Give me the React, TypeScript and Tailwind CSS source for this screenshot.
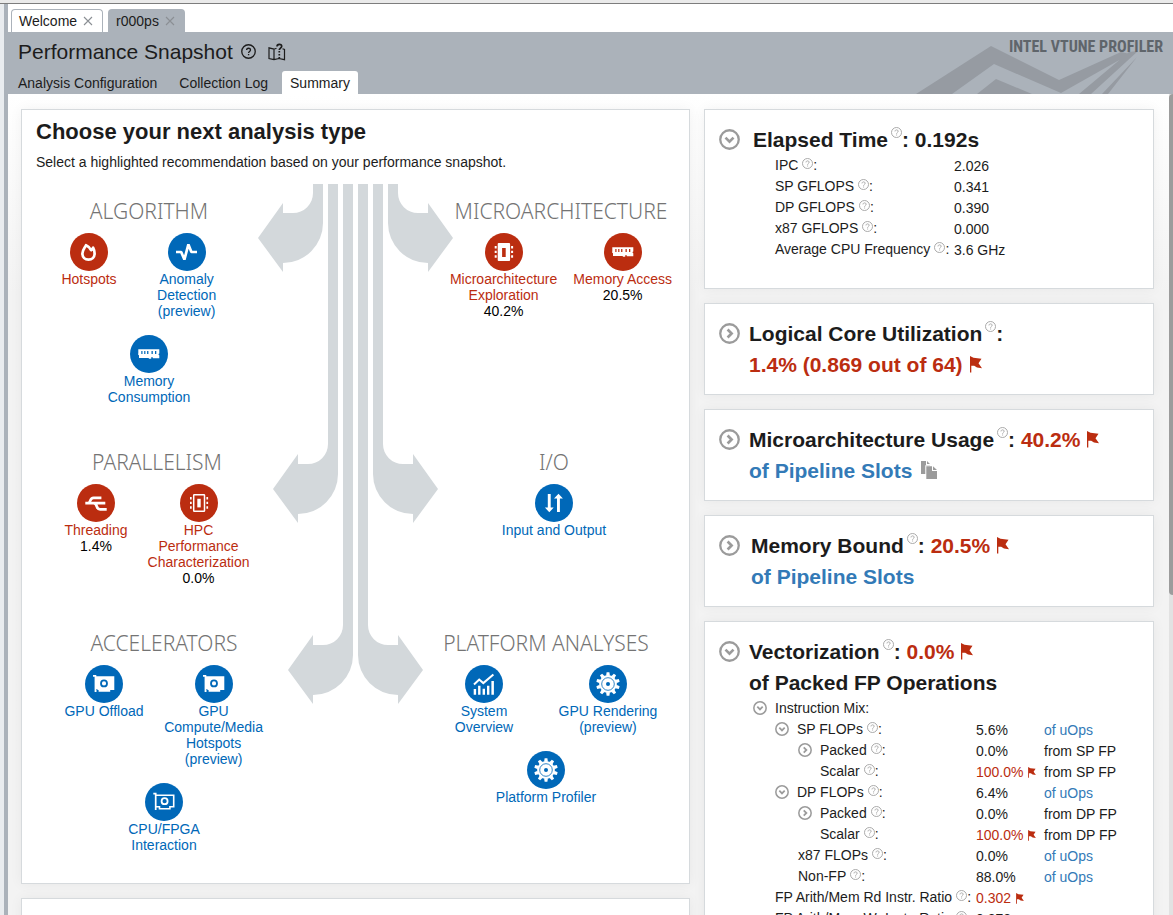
import React, { useState } from "react";

type IconName =
  | "flame" | "pulse" | "memory" | "chip" | "chipOutline" | "threads"
  | "io" | "gpu" | "gpuOutline" | "chart" | "gear";

const glyphs: Record<IconName, React.ReactNode> = {
  flame: (
    <path
      d="M16 12.200C14.800 15 12.400 17 12.400 20.600c0 3.700 2.600 6 6.100 6s6.100-2.400 6.100-6c0-2.100-.6-4.200-1.500-5.900-.4 1.200-1.100 2-2 2.500-.9-2.200-2.600-4-5.100-5z"
      fill="none" stroke="white" strokeWidth="2.700" strokeLinejoin="round"
    />
  ),
  pulse: <path d="M8 19h5.200l3.200 7.600L20.400 11.400 23.400 19H29" fill="none" stroke="white" strokeWidth="2.700" strokeLinejoin="bevel" />,
  memory: (
    <path
      fill="white" fillRule="evenodd"
      d="M8.300 14.300h21v4.200c-1 .2-1 1.600 0 1.800v3H22.800v-1.100h-1.600v1.500H18.800v-.7H9v-2.800c-1 0-1-1.600-.7-1.700zM11.300 16v3h1.200v-3zM14.200 16v3h1.200v-3zM17.100 16v3h1.300v-3zM21.500 16v3h1.300v-3zM25 16v3h1.300v-3z"
    />
  ),
  chip: (
    <g fill="white">
      <path fillRule="evenodd" d="M13.700 10h10.400q1 0 1 1v16q0 1-1 1H13.700q-1 0-1-1V11q0-1 1-1zM17.100 15v9h3.600v-9z" />
      <path d="M9.700 13h2v2.400h-2zM9.700 17.700h2v2.400h-2zM9.700 22.300h2v2.400h-2zM26.100 13h2v2.400h-2zM26.100 17.700h2v2.400h-2zM26.100 22.300h2v2.400h-2z" />
    </g>
  ),
  chipOutline: (
    <g fill="white">
      <rect x="13.700" y="10.700" width="10.800" height="16.600" rx=".6" fill="none" stroke="white" strokeWidth="1.500" />
      <rect x="17.300" y="14.800" width="3.400" height="8.600" />
      <path d="M10 13h1.700v2.400H10zM10 17.700h1.700v2.400H10zM10 22.300h1.700v2.400H10zM26.400 13h1.700v2.400h-1.700zM26.400 17.700h1.700v2.400h-1.700zM26.400 22.300h1.700v2.400h-1.700z" />
    </g>
  ),
  threads: (
    <path
      d="M8.300 19.200H28.300M11 19.200c3 0 1.200-5.400 5.600-5.400H24.400M16.500 19.200c4.600 0 1.800 6.200 6.600 6.200h6.600"
      fill="none" stroke="white" strokeWidth="2.700"
    />
  ),
  io: <path fill="white" d="M12.800 10h2.900v13.600h3l-4.400 4.600-4.400-4.600h2.900zM22 28h2.900V14.400h3L23.500 9.800 19 14.400h3z" />,
  gpu: (
    <g>
      <path fill="white" d="M8 10h3.300v1.300h18V25h-4.100v1.700H13.600V25h-2.100v2H9.600V11.700H8z" />
      <path fill="#0068b8" d="M11.400 24h1v1h-1z" />
      <circle cx="19" cy="18.400" r="3" fill="none" stroke="#0068b8" strokeWidth="1.800" />
    </g>
  ),
  gpuOutline: (
    <g fill="none" stroke="white">
      <path d="M8.300 10.700h2.400V27" strokeWidth="1.700" />
      <path d="M10.700 12.200h18v11.600h-3.800v2H14.500v-2h-3.800" strokeWidth="1.600" />
      <circle cx="19.600" cy="18.200" r="3" strokeWidth="1.800" />
    </g>
  ),
  chart: (
    <g>
      <path fill="white" d="M8.700 24h2.400v5.700H8.700zM13.100 20.700h2.400v9h-2.400zM17.600 23.700H20v6h-2.400zM22 20.700h2.400v9H22zM26.400 16h2.500v13.700h-2.500z" />
      <path d="M9 19.500l5.200-5 4.100 3.600L28.400 9.400" fill="none" stroke="white" strokeWidth="2" />
    </g>
  ),
  gear: (
    <g>
      <circle cx="19" cy="19" r="8.900" fill="white" />
      <g fill="white">
        {[0, 36, 72, 108, 144, 180, 216, 252, 288, 324].map((a) => (
          <path key={a} d="M17.600 7.200h2.800l.5 3.600h-3.800z" transform={`rotate(${a} 19 19)`} />
        ))}
      </g>
      <circle cx="19" cy="19" r="6.300" fill="none" stroke="#0068b8" strokeWidth=".8" />
      <circle cx="19" cy="19" r="2" fill="#0068b8" />
    </g>
  ),
};

type Item = { icon: IconName; lines: string[]; value?: string; hot?: boolean; wide?: boolean };

function Analysis({ icon, lines, value, hot, wide }: Item) {
  return (
    <div className={`flex shrink-0 flex-col items-center text-center text-sm leading-4 ${wide ? "w-[100px]" : ""}`}>
      <a href="#" className={`flex flex-col items-center ${hot ? "text-[#bb2d10]" : "text-[#0068b8]"}`}>
        <svg viewBox="0 0 38 38" className="size-[38px]" aria-hidden="true">
          <circle cx="19" cy="19" r="19" fill="currentColor" />
          {glyphs[icon]}
        </svg>
        {lines.map((l) => (
          <span key={l} className="whitespace-nowrap">{l}</span>
        ))}
      </a>
      {value && <span className="text-black">{value}</span>}
    </div>
  );
}

function Section({ title, rows, className, gap }: { title: string; rows: Item[][]; className: string; gap: string }) {
  return (
    <section className={`flex flex-col items-center ${className}`}>
      <h3 className="mb-2 font-['Noto_Sans',sans-serif] text-[21px] leading-7 font-light whitespace-nowrap text-[#747474]">{title}</h3>
      <div className="flex flex-col items-center gap-4">
        {rows.map((r, i) => (
          <div key={i} className={`flex justify-center ${gap}`}>
            {r.map((it) => <Analysis key={it.lines.join()} {...it} />)}
          </div>
        ))}
      </div>
    </section>
  );
}

function Arrows() {
  const left = (
    <>
      <path d="M55 0h10v39a40 40 0 0 1-40 40v9L0 54l25-35v10h10a20 20 0 0 0 20-20z" />
      <path d="M70 0h10v290a40 40 0 0 1-40 40v9L15 305l25-35v10h10a20 20 0 0 0 20-20z" />
      <path d="M85 0h10v471a40 40 0 0 1-40 40v9L30 486l25-35v10h10a20 20 0 0 0 20-20z" />
    </>
  );
  return (
    <svg viewBox="0 0 195 520" className="row-span-3 h-[520px] w-[195px] fill-[#d3d8db]" aria-hidden="true">
      {left}
      <g transform="matrix(-1 0 0 1 195 0)">{left}</g>
    </svg>
  );
}

function Help({ large }: { large?: boolean }) {
  return (
    <button type="button" aria-label="Help" className={large ? "ml-[3px] align-[9px]" : "ml-1 align-[1px]"}>
      <svg viewBox="0 0 11 11" className="size-[11px]" fill="none" stroke="#a0a0a0" strokeWidth=".9">
        <circle cx="5.500" cy="5.500" r="5" />
        <path d="M4 4.400c0-2 3.100-2 3.100-.1 0 1.200-1.500 1.200-1.500 2.400M5.600 7.500v1" />
      </svg>
    </button>
  );
}

function Flag({ large }: { large?: boolean }) {
  return (
    <svg viewBox="0 0 12 17" className={large ? "ml-[7px] inline h-[17px] w-3 align-[-1px]" : "ml-[5px] inline h-[11px] w-2 align-[-1px]"} fill="currentColor" role="img" aria-label="Issue">
      <path d="M0 0l3.500 1.800 8 1L8.500 7.200 12 12.300 7 11.600 4.200 9.800H1.300V16.500H0z" />
    </svg>
  );
}

function Toggle({ open, small, label }: { open: boolean; small?: boolean; label: string }) {
  const [isOpen, setOpen] = useState(open);
  return (
    <button type="button" aria-label={label} aria-expanded={isOpen} onClick={() => setOpen(!isOpen)} className="shrink-0 text-[#9b9b9b]">
      <svg viewBox="0 0 22 22" className={small ? "size-[14px]" : "size-[21px]"} fill="none" stroke="currentColor" strokeWidth="2.400">
        <circle cx="11" cy="11" r="9.700" />
        <path d={isOpen ? "M6.800 9l4.200 4.200L15.200 9" : "M9 6.800l4.200 4.200L9 15.200"} strokeWidth="2.800" />
      </svg>
    </button>
  );
}

function Card({ title, open, value, second, gap = "gap-2", children }: {
  title: string; open: boolean; value?: React.ReactNode; second?: React.ReactNode; gap?: string; children?: React.ReactNode;
}) {
  return (
    <section className="border border-[#d6dadd] bg-white py-3.5 shadow-[0_0_12px_rgba(0,0,0,0.05)]">
      <div className={`flex items-start pl-3.5 ${gap}`}>
        <span className="flex h-[31px] w-[22px] items-center"><Toggle open={open} label={title} /></span>
        <h2 className="text-[21px] leading-[31px] font-bold">
          <span className="block h-[31px] whitespace-nowrap">
            {title}<Help large />: {value}
          </span>
          {second && <span className="block h-[31px] whitespace-nowrap">{second}</span>}
        </h2>
      </div>
      {children}
    </section>
  );
}

const elapsed = [
  ["IPC", "2.026"],
  ["SP GFLOPS", "0.341"],
  ["DP GFLOPS", "0.390"],
  ["x87 GFLOPS", "0.000"],
  ["Average CPU Frequency", "3.6 GHz"],
];

type Row = { label: string; indent: string; toggle?: "open" | "closed"; help?: boolean; value?: string; flag?: boolean; unit?: string; link?: boolean };
const L0 = "pl-0", L1 = "pl-[22px]", L2 = "pl-[45px]", L3 = "pl-[67px]";
const mix: Row[] = [
  { label: "Instruction Mix", indent: L0, toggle: "open" },
  { label: "SP FLOPs", indent: L1, toggle: "open", help: true, value: "5.6%", unit: "of uOps", link: true },
  { label: "Packed", indent: L2, toggle: "closed", help: true, value: "0.0%", unit: "from SP FP" },
  { label: "Scalar", indent: L3, help: true, value: "100.0%", flag: true, unit: "from SP FP" },
  { label: "DP FLOPs", indent: L1, toggle: "open", help: true, value: "6.4%", unit: "of uOps", link: true },
  { label: "Packed", indent: L2, toggle: "closed", help: true, value: "0.0%", unit: "from DP FP" },
  { label: "Scalar", indent: L3, help: true, value: "100.0%", flag: true, unit: "from DP FP" },
  { label: "x87 FLOPs", indent: L2, help: true, value: "0.0%", unit: "of uOps", link: true },
  { label: "Non-FP", indent: L2, help: true, value: "88.0%", unit: "of uOps", link: true },
  { label: "FP Arith/Mem Rd Instr. Ratio", indent: L1, help: true, value: "0.302", flag: true },
  { label: "FP Arith/Mem Wr Instr. Ratio", indent: L1, help: true, value: "0.872" },
];

function CloseX({ label }: { label: string }) {
  return (
    <button type="button" aria-label={label}>
      <svg viewBox="0 0 10 10" className="size-[10px]" stroke="#8b8f94" strokeWidth="1.100"><path d="M1 1l8 8M9 1L1 9" /></svg>
    </button>
  );
}

const red = "text-[#bb2d10]";
const link = "text-[#337ab7]";

export default function App() {
  return (
    <div className="flex h-screen flex-col overflow-hidden bg-white font-['Liberation_Sans',Arial,sans-serif] text-sm text-[#1c1c1c]">
      <div className="h-1 shrink-0 border-b border-[#7d7d7d] bg-[#eaeaea]" />
      <div className="flex min-h-0 flex-1">
        <div className="w-2 shrink-0 border-r-4 border-[#abb2ba] bg-[#e9ecef]" />
        <div className="flex min-w-0 flex-1 flex-col">
          <nav className="flex h-7 shrink-0 items-end gap-[5px] pl-[3px]">
            <div className="flex h-[23px] items-center gap-1.5 rounded-t border border-b-0 border-[#abb2ba] bg-white pr-[9px] pl-[7px]">
              <button type="button">Welcome</button>
              <CloseX label="Close Welcome" />
            </div>
            <div className="flex h-[23px] items-center gap-1.5 rounded-t bg-[#abb2ba] pr-2.5 pl-2">
              <button type="button">r000ps</button>
              <CloseX label="Close r000ps" />
            </div>
          </nav>

          <header className="relative shrink-0 bg-[#abb2ba] pl-0.5">
            <svg viewBox="0 0 257 62" className="absolute right-0 bottom-0 h-[62px] w-[257px] fill-[#969ba2]" aria-hidden="true">
              <path d="M0 62L75 14l68 34 62-28 9 2-69 39-67-29-42 30zM61 62l19-15 36 15zM163 62l50-42 9-1-47 43zM186 62l35-37-29 37z" />
            </svg>
            <div className="relative flex h-[39px] items-center pl-2">
              <h1 className="text-[21px] leading-7">Performance Snapshot</h1>
              <button type="button" aria-label="Help" className="ml-2">
                <svg viewBox="0 0 16 16" className="size-[15px]" fill="none" stroke="#1c1c1c" strokeWidth="1.400">
                  <circle cx="8" cy="8" r="7.200" />
                  <path d="M6 6.500c0-2.600 4.100-2.600 4.100-.2 0 1.500-2 1.700-2 3.200M8.100 10.600v1.500" />
                </svg>
              </button>
              <button type="button" aria-label="Take a tour" className="ml-3">
                <svg viewBox="0 0 18 18" className="size-[18px]" fill="none" stroke="#1c1c1c" strokeWidth="1.200">
                  <path d="M8.500 5.200L6 6.200 1 4.800v10.700l5 1.200 5-1.200 5.500 1.200V6.500l-2-.7M6 6.200v10.500" />
                  <path d="M9 3.600c0-3 4.700-3 4.700-.3 0 1.900-2.400 1.900-2.400 3.800M11.300 8v1.600M11.300 11v1.500M11.300 14v1.500" strokeWidth="1.700" />
                </svg>
              </button>
              <span className="mr-2.5 mb-2.5 ml-auto font-['Liberation_Sans_Narrow','Roboto_Condensed','Liberation_Sans',sans-serif] text-[16px] leading-5 font-bold text-[#5f656b]">
                INTEL VTUNE PROFILER
              </span>
            </div>
            <nav className="relative flex h-[23px] gap-1.5">
              <button type="button" className="px-2">Analysis Configuration</button>
              <button type="button" className="px-2">Collection Log</button>
              <button type="button" className="rounded-t-[3px] bg-white px-2">Summary</button>
            </nav>
          </header>

          <div className="flex min-h-0 flex-1">
            <main className="min-w-0 flex-1 overflow-y-auto bg-[#f3f3f3] bg-linear-to-b from-white to-[#f3f3f3] to-[200px] pt-[15px] pr-[15px] pl-[13px] [scrollbar-width:none]">
              <div className="grid grid-cols-[669fr_450fr] items-start gap-3.5">
                <div className="flex flex-col gap-3.5">
                  <section className="border border-[#d6dadd] bg-white pt-2 pb-[30px] shadow-[0_0_12px_rgba(0,0,0,0.05)]">
                    <h2 className="pl-3.5 text-[22px] leading-7 font-bold">Choose your next analysis type</h2>
                    <p className="mt-1.5 pl-3.5 leading-5">Select a highlighted recommendation based on your performance snapshot.</p>
                    <div className="mt-3 grid grid-cols-[minmax(0,1fr)_195px_minmax(0,1fr)] grid-rows-[264px_181px_auto]">
                      <Section title="ALGORITHM" className="pt-[13px] pl-[18px]" gap="gap-5" rows={[
                        [{ icon: "flame", lines: ["Hotspots"], hot: true }, { icon: "pulse", lines: ["Anomaly", "Detection", "(preview)"], wide: true }],
                        [{ icon: "memory", lines: ["Memory", "Consumption"] }],
                      ]} />
                      <Arrows />
                      <Section title="MICROARCHITECTURE" className="pt-[13px] pr-5" gap="gap-4" rows={[
                        [{ icon: "chip", lines: ["Microarchitecture", "Exploration"], value: "40.2%", hot: true }, { icon: "memory", lines: ["Memory Access"], value: "20.5%", hot: true }],
                      ]} />
                      <Section title="PARALLELISM" className="pl-[34px]" gap="gap-5" rows={[
                        [{ icon: "threads", lines: ["Threading"], value: "1.4%", hot: true }, { icon: "chipOutline", lines: ["HPC", "Performance", "Characterization"], value: "0.0%", hot: true }],
                      ]} />
                      <Section title="I/O" className="pr-[34px]" gap="gap-5" rows={[[{ icon: "io", lines: ["Input and Output"] }]]} />
                      <Section title="ACCELERATORS" className="pl-12" gap="gap-5" rows={[
                        [{ icon: "gpu", lines: ["GPU Offload"] }, { icon: "gpu", lines: ["GPU", "Compute/Media", "Hotspots", "(preview)"], wide: true }],
                        [{ icon: "gpuOutline", lines: ["CPU/FPGA", "Interaction"] }],
                      ]} />
                      <Section title="PLATFORM ANALYSES" className="pr-[50px]" gap="gap-6" rows={[
                        [{ icon: "chart", lines: ["System", "Overview"], wide: true }, { icon: "gear", lines: ["GPU Rendering", "(preview)"], wide: true }],
                        [{ icon: "gear", lines: ["Platform Profiler"] }],
                      ]} />
                    </div>
                  </section>
                  <section className="h-40 border border-[#d6dadd] bg-white shadow-[0_0_12px_rgba(0,0,0,0.05)]" />
                </div>

                <div className="flex flex-col gap-3.5">
                  <Card title="Elapsed Time" open gap="gap-3" value="0.192s">
                    <table className="mb-3.5 ml-[70px] table-fixed">
                      <tbody>
                        {elapsed.map(([k, v]) => (
                          <tr key={k} className="h-[21px]">
                            <th scope="row" className="w-[179px] p-0 pb-px text-left font-normal whitespace-nowrap">{k}<Help />:</th>
                            <td className="p-0 pt-px whitespace-nowrap">{v}</td>
                          </tr>
                        ))}
                      </tbody>
                    </table>
                  </Card>
                  <Card title="Logical Core Utilization" open={false} second={<span className={red}>1.4% (0.869 out of 64)<Flag large /></span>} />
                  <Card
                    title="Microarchitecture Usage" open={false}
                    value={<span className={red}>40.2%<Flag large /></span>}
                    second={
                      <>
                        <a href="#" className={link}>of Pipeline Slots</a>
                        <button type="button" aria-label="Copy" className="ml-[9px] align-[-1px]">
                          <svg viewBox="0 0 16 18" className="h-[18px] w-4 fill-[#9b9b9b]">
                            <path d="M0 0h5v4h4v.3H4.300V13H0zM6 0l3 3H6zM5.300 5.300H11V10h5v8H5.300zM12 5.300L16 9h-4z" />
                          </svg>
                        </button>
                      </>
                    }
                  />
                  <Card
                    title="Memory Bound" open={false} gap="gap-2.5"
                    value={<span className={red}>20.5%<Flag large /></span>}
                    second={<a href="#" className={link}>of Pipeline Slots</a>}
                  />
                  <Card title="Vectorization" open value={<span className={red}>0.0%<Flag large /></span>} second="of Packed FP Operations">
                    <table className="ml-12 table-fixed">
                      <tbody>
                        {mix.map((r, i) => (
                          <tr key={i} className="h-[21px]">
                            <th scope="row" className={`w-[223px] p-0 pb-px text-left font-normal whitespace-nowrap ${r.indent}`}>
                              <span className="flex items-center gap-2">
                                {r.toggle && <Toggle small open={r.toggle === "open"} label={r.label} />}
                                <span>{r.label}{r.help && <Help />}:</span>
                              </span>
                            </th>
                            <td className={`w-[68px] p-0 pt-px whitespace-nowrap ${r.flag ? red : ""}`}>{r.value}{r.flag && <Flag />}</td>
                            <td className="p-0 pt-px whitespace-nowrap">
                              {r.link ? <a href="#" className={link}>{r.unit}</a> : r.unit}
                            </td>
                          </tr>
                        ))}
                      </tbody>
                    </table>
                  </Card>
                </div>
              </div>
            </main>
            <div className="w-1 shrink-0 bg-[#e2e2e2]">
              <div className="h-[61%] rounded-l bg-[#9c9c9c]" />
            </div>
          </div>
        </div>
      </div>
    </div>
  );
}
